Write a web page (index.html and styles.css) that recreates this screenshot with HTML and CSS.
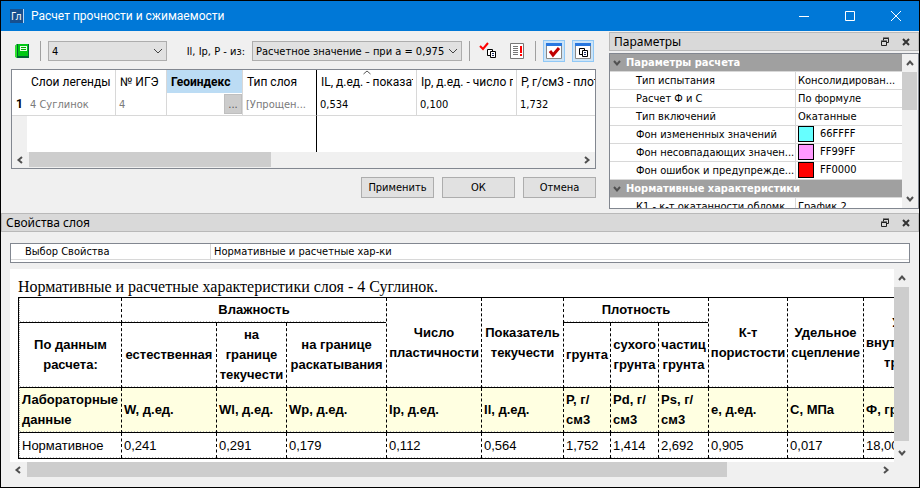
FILE: index.html
```html
<!DOCTYPE html>
<html lang="ru">
<head>
    <meta charset="UTF-8">
    <meta name="viewport" content="width=device-width, initial-scale=1.0">
    <title>Расчет прочности и сжимаемости</title>
    <link rel="stylesheet" href="styles.css">
</head>
<body>
    <svg class="defs" width="0" height="0">
        <symbol id="float" viewBox="0 0 10 10">
            <path d="M3.500 3.500v-2h5v4h-2M3 1h6" fill="none" stroke="#222"/>
            <path d="M1.500 4.500h5v4h-5zM1 4h6" fill="none" stroke="#222"/>
        </symbol>
        <symbol id="cross" viewBox="0 0 10 10">
            <path d="M2 2l6 6M8 2L2 8" stroke="#333" stroke-width="2"/>
        </symbol>
        <symbol id="chevron" viewBox="0 0 10 10">
            <path d="M1 3l4 4 4-4" fill="none" stroke="#444"/>
        </symbol>
        <symbol id="arrow" viewBox="0 0 10 10">
            <path d="M2 3l3 3.500L8 3" fill="none" stroke="#505050" stroke-width="2"/>
        </symbol>
        <symbol id="pages" viewBox="0 0 10 10">
            <path d="M.5.5h5v6h-5z" fill="#fff" stroke="#000"/>
            <path d="M3.500 2.500h5v6h-5z" fill="#fff" stroke="#000"/>
            <path d="M5 4.500h2M5 6.500h2" stroke="#236"/>
        </symbol>
    </svg>

    <header class="title-bar">
        <svg class="logo" width="14" height="14" viewBox="0 0 14 14">
            <path d="M0 0h14v14H0z" fill="#17508f"/>
            <path d="M13 0h1v14h-1z" fill="#b9d7f5"/>
            <text x="1" y="11" class="logo-text">Гл</text>
        </svg>
        <h1>Расчет прочности и сжимаемости</h1>
        <button class="win-btn" aria-label="Свернуть"><svg width="12" height="12"><path d="M1 6.500h10" stroke="#fff"/></svg></button>
        <button class="win-btn" aria-label="Развернуть"><svg width="12" height="12"><path d="M1.500 1.500h9v9h-9z" fill="none" stroke="#fff"/></svg></button>
        <button class="win-btn" aria-label="Закрыть"><svg width="12" height="12"><path d="M1 1l10 10M11 1L1 11" stroke="#fff"/></svg></button>
    </header>

    <main class="top">
        <section class="work">
            <div class="toolbar">
                <button class="tool" aria-label="Справочник">
                    <svg width="16" height="16">
                        <path d="M3 1h12v14H3L1 13V3z" fill="#063"/>
                        <path d="M4 1h10v12H4z" fill="#00c814"/>
                        <path d="M1 3l2-2v14l-2-1z" fill="#2ee02e"/>
                        <path d="M6 3h7v5H6z" fill="#e8ffe8"/>
                        <path d="M7 4.500h5M7 6.500h5" stroke="#0a0"/>
                    </svg>
                </button>
                <span class="sep"></span>
                <div class="combo combo-layer">
                    <select aria-label="Слой"><option>4</option></select>
                    <svg width="10" height="10"><use href="#chevron"/></svg>
                </div>
                <label for="source">Il, Ip, P - из:</label>
                <div class="combo combo-source">
                    <select id="source"><option>Расчетное значение – при a = 0,975</option></select>
                    <svg width="10" height="10"><use href="#chevron"/></svg>
                </div>
                <span class="sep"></span>
                <button class="tool" aria-label="Проверить">
                    <svg width="18" height="18">
                        <path d="M1 4l3 3 5-6" fill="none" stroke="#f00" stroke-width="2"/>
                        <use href="#pages" x="8" y="7" width="10" height="10"/>
                    </svg>
                </button>
                <button class="tool" aria-label="Ошибки">
                    <svg width="16" height="18">
                        <path d="M1.500 1.500h13v15h-13z" fill="#fff" stroke="#777"/>
                        <path d="M4 4.500h5M4 6.500h5M4 8.500h5M4 10.500h5M4 12.500h5" stroke="#777"/>
                        <path d="M11 4h2v7h-2zM11 12h2v2h-2z" fill="#f00"/>
                    </svg>
                </button>
                <span class="sep"></span>
                <button class="tool pressed" aria-label="Параметры" aria-pressed="true">
                    <svg width="16" height="16">
                        <path d="M.5.5h15v15H.5z" fill="#fff" stroke="#888"/>
                        <path d="M0 0h16v3H0z" fill="#2878e0"/>
                        <path d="M4 8l3 4 6-7" fill="none" stroke="#c00000" stroke-width="3"/>
                    </svg>
                </button>
                <button class="tool pressed" aria-label="Свойства" aria-pressed="true">
                    <svg width="16" height="16">
                        <path d="M.5.5h15v15H.5z" fill="#fff" stroke="#888"/>
                        <path d="M0 0h16v3H0z" fill="#2878e0"/>
                        <use href="#pages" x="4" y="5" width="10" height="10"/>
                    </svg>
                </button>
            </div>

            <div class="grid">
                <div class="grid-area">
                    <table class="layers">
                        <colgroup>
                            <col class="c-num"><col class="c-layer"><col class="c-ige"><col class="c-geo"><col class="c-type">
                            <col class="c-val"><col class="c-val"><col>
                        </colgroup>
                        <thead>
                            <tr>
                                <th></th>
                                <th>Слои легенды</th>
                                <th>№ ИГЭ</th>
                                <th class="current">Геоиндекс</th>
                                <th class="frozen">Тип слоя</th>
                                <th class="sorted"><div class="clip">IL, д.ед. - показат</div><svg width="8" height="5"><path d="M.5 4L4 1l3.500 3" fill="none" stroke="#555"/></svg></th>
                                <th><div class="clip">Ip, д.ед. - число п</div></th>
                                <th><div class="clip">P, г/см3 - плотн</div></th>
                            </tr>
                        </thead>
                        <tbody>
                            <tr>
                                <th scope="row">1</th>
                                <td class="muted">4 Суглинок</td>
                                <td class="muted">4</td>
                                <td class="pick"><button aria-label="Выбрать">...</button></td>
                                <td class="muted frozen">[Упрощен...</td>
                                <td>0,534</td>
                                <td>0,100</td>
                                <td>1,732</td>
                            </tr>
                            <tr class="rest">
                                <th></th><td></td><td></td><td></td><td class="frozen"></td><td></td><td></td><td></td>
                            </tr>
                        </tbody>
                    </table>
                </div>
                <div class="hscroll">
                    <svg class="left" width="10" height="10"><use href="#arrow"/></svg>
                    <div class="track"><div class="thumb thumb-grid"></div></div>
                    <svg class="right" width="10" height="10"><use href="#arrow"/></svg>
                </div>
            </div>

            <div class="actions">
                <button>Применить</button>
                <button>ОК</button>
                <button>Отмена</button>
            </div>
        </section>

        <aside class="dock">
            <div class="dock-title">
                <h2>Параметры</h2>
                <button aria-label="Открепить"><svg width="10" height="10"><use href="#float"/></svg></button>
                <button aria-label="Закрыть"><svg width="10" height="10"><use href="#cross"/></svg></button>
            </div>
            <div class="props">
                <div class="props-list">
                    <table>
                        <colgroup><col class="c-name"><col></colgroup>
                        <tbody>
                            <tr class="group"><th colspan="2"><svg width="10" height="10"><use href="#arrow"/></svg>Параметры расчета</th></tr>
                            <tr><td>Тип испытания</td><td>Консолидирован...</td></tr>
                            <tr><td>Расчет Ф и С</td><td>По формуле</td></tr>
                            <tr><td>Тип включений</td><td>Окатанные</td></tr>
                            <tr><td>Фон измененных значений</td><td><span class="swatch changed"></span>66FFFF</td></tr>
                            <tr><td>Фон несовпадающих значен...</td><td><span class="swatch mismatch"></span>FF99FF</td></tr>
                            <tr><td>Фон ошибок и предупрежде...</td><td><span class="swatch error"></span>FF0000</td></tr>
                            <tr class="group"><th colspan="2"><svg width="10" height="10"><use href="#arrow"/></svg>Нормативные характеристики</th></tr>
                            <tr><td>К1 - к-т окатанности обломк...</td><td>График 2</td></tr>
                        </tbody>
                    </table>
                </div>
                <div class="vscroll">
                    <svg class="up" width="10" height="10"><use href="#arrow"/></svg>
                    <div class="track"><div class="thumb thumb-props"></div></div>
                    <svg width="10" height="10"><use href="#arrow"/></svg>
                </div>
            </div>
        </aside>
    </main>

    <section class="layer">
        <div class="dock-title">
            <h2>Свойства слоя</h2>
            <button aria-label="Открепить"><svg width="10" height="10"><use href="#float"/></svg></button>
            <button aria-label="Закрыть"><svg width="10" height="10"><use href="#cross"/></svg></button>
        </div>
        <div class="layer-body">
            <div class="choice">
                <span>Выбор Свойства</span>
                <span>Нормативные и расчетные хар-ки</span>
            </div>
            <div class="view">
                <div class="report">
                    <p>Нормативные и расчетные характеристики слоя - 4 Суглинок.</p>
                    <table>
                        <colgroup>
                            <col class="r1"><col class="r2"><col class="r3"><col class="r4"><col class="r5"><col class="r6">
                            <col class="r7"><col class="r8"><col class="r9"><col class="r10"><col class="r11"><col class="r12">
                        </colgroup>
                        <thead>
                            <tr>
                                <th></th>
                                <th colspan="3">Влажность</th>
                                <th rowspan="2">Число пластичности</th>
                                <th rowspan="2">Показатель текучести</th>
                                <th colspan="3">Плотность</th>
                                <th rowspan="2">К-т пористости</th>
                                <th rowspan="2">Удельное сцепление</th>
                                <th rowspan="2">Угол<br>внутреннего<br>трения</th>
                            </tr>
                            <tr class="sub">
                                <th>По данным расчета:</th>
                                <th>естественная</th>
                                <th>на границе текучести</th>
                                <th>на границе раскатывания</th>
                                <th>грунта</th>
                                <th>сухого грунта</th>
                                <th>частиц грунта</th>
                            </tr>
                        </thead>
                        <tbody>
                            <tr class="units">
                                <th>Лабораторные данные</th>
                                <th>W, д.ед.</th>
                                <th>Wl, д.ед.</th>
                                <th>Wp, д.ед.</th>
                                <th>Ip, д.ед.</th>
                                <th>Il, д.ед.</th>
                                <th>P, г/<br>см3</th>
                                <th>Pd, г/<br>см3</th>
                                <th>Ps, г/<br>см3</th>
                                <th>е, д.ед.</th>
                                <th>С, МПа</th>
                                <th>Ф, град.</th>
                            </tr>
                            <tr>
                                <td>Нормативное</td>
                                <td>0,241</td>
                                <td>0,291</td>
                                <td>0,179</td>
                                <td>0,112</td>
                                <td>0,564</td>
                                <td>1,752</td>
                                <td>1,414</td>
                                <td>2,692</td>
                                <td>0,905</td>
                                <td>0,017</td>
                                <td>18,000</td>
                            </tr>
                        </tbody>
                    </table>
                </div>
                <div class="vscroll">
                    <svg class="up" width="10" height="10"><use href="#arrow"/></svg>
                    <div class="track"><div class="thumb thumb-report"></div></div>
                    <svg width="10" height="10"><use href="#arrow"/></svg>
                </div>
            </div>
            <div class="hscroll hscroll-report">
                <svg class="left" width="10" height="10"><use href="#arrow"/></svg>
                <div class="track"><div class="thumb thumb-wide"></div></div>
                <svg class="right" width="10" height="10"><use href="#arrow"/></svg>
            </div>
        </div>
    </section>
</body>
</html>
```

FILE: styles.css
```css
* {
    box-sizing: border-box;
}

body {
    margin: 0;
    min-height: 100vh;
    display: flex;
    flex-direction: column;
    border: 1px solid #000;
    background: #f0f0f0;
    color: #000;
    font-family: "DejaVu Sans Condensed", "DejaVu Sans", sans-serif;
    font-size: 11px;
}

button, select {
    font: inherit;
    color: inherit;
    padding: 0;
    margin: 0;
}

button {
    border: none;
    background: none;
}

svg {
    display: block;
    flex: none;
}

.defs {
    position: absolute;
}

h1, h2 {
    flex: 1;
    margin: 0;
    font-family: "Noto Sans", sans-serif;
    font-size: 12px;
    font-weight: normal;
}

/* title bar */
.title-bar {
    display: flex;
    align-items: center;
    height: 30px;
    padding-left: 9px;
    background: #0078d7;
    color: #fff;
}

.title-bar h1 {
    padding-left: 7px;
    font-family: Roboto, sans-serif;
}

.logo-text {
    font-family: "Noto Sans", sans-serif;
    font-size: 10px;
    fill: #fff;
}

.win-btn {
    width: 46px;
    height: 30px;
    display: grid;
    place-items: center;
}

/* upper part */
.top {
    display: flex;
    padding-top: 1px;
    height: 182px;
}

.work {
    flex: 1;
    min-width: 0;
    padding: 8px 13px 0 10px;
}

.toolbar {
    display: flex;
    align-items: center;
    gap: 7px;
    height: 22px;
    margin-bottom: 7px;
}

.toolbar label {
    width: 71px;
    flex: none;
    text-align: right;
    white-space: nowrap;
}

.tool {
    flex: none;
    width: 22px;
    height: 22px;
    display: grid;
    place-items: center;
}

.tool.pressed {
    background: #cce4f7;
    border: 1px solid #90c8f6;
}

.sep {
    flex: none;
    width: 1px;
    height: 20px;
    background: #a0a0a0;
}

.combo {
    position: relative;
    flex: none;
    height: 20px;
}

.combo-layer {
    width: 119px;
}

.combo-source {
    width: 210px;
}

.combo select {
    appearance: none;
    width: 100%;
    height: 20px;
    padding: 0 3px;
    border: 1px solid #adadad;
    border-radius: 0;
    background: #e1e1e1;
}

.combo svg {
    position: absolute;
    right: 4px;
    top: 5px;
    pointer-events: none;
}

/* layer grid */
.grid {
    border: 1px solid #828790;
    background: #fff;
}

.grid-area {
    height: 82px;
    overflow: hidden;
}

.layers {
    width: 100%;
    table-layout: fixed;
    border-collapse: separate;
    border-spacing: 0;
}

.c-num { width: 15px; }
.c-layer { width: 89px; }
.c-ige { width: 51px; }
.c-geo { width: 76px; }
.c-type { width: 74px; }
.c-val { width: 100px; }

.layers th, .layers td {
    height: 23px;
    padding: 0 3px;
    border-right: 1px solid #d8d8d8;
    text-align: left;
    white-space: nowrap;
    overflow: hidden;
}

.layers th {
    font-family: Roboto, sans-serif;
    font-size: 12px;
    font-weight: normal;
}

.layers thead th {
    position: relative;
    padding: 0 3px 0 4px;
}

.clip {
    overflow: hidden;
}

.layers th:first-child {
    padding: 0;
    border-right: none;
    text-align: center;
    font-weight: bold;
}

.layers tbody tr:first-child > * {
    border-bottom: 1px solid #d8d8d8;
}

.layers th:last-child, .layers td:last-child {
    border-right: none;
}

.layers thead th:last-child {
    padding-right: 0;
}

.layers thead .current {
    background: #bcdcf4;
    font-weight: bold;
}

.layers thead .sorted svg {
    position: absolute;
    top: 0;
    left: 46px;
}

.layers .muted {
    color: #7a7a7a;
}

.layers .pick {
    padding: 0;
    text-align: right;
}

.pick button {
    width: 18px;
    height: 20px;
    background: #ccc;
    border: 1px solid #bfbfbf;
    color: #555;
}

.layers .rest > * {
    height: 36px;
    border-color: transparent;
}

.layers .rest th {
    background: #f0f0f0;
}

.layers .frozen, .layers .rest .frozen {
    border-right: 1px solid #000;
}

/* scroll bars */
.hscroll {
    display: flex;
    align-items: center;
    height: 16px;
    padding: 0 3px;
    gap: 4px;
    background: #f0f0f0;
}

.vscroll {
    display: flex;
    flex-direction: column;
    align-items: center;
    flex: none;
    width: 16px;
    padding: 4px 0;
    gap: 4px;
    background: #f0f0f0;
}

.track {
    flex: 1;
    align-self: stretch;
}

.thumb {
    background: #cdcdcd;
}

.hscroll .thumb {
    height: 15px;
}

.vscroll .thumb {
    width: 15px;
}

.thumb-grid { width: 44%; }
.thumb-wide { width: 82.4%; }
.thumb-props { height: 32%; }
.thumb-report { height: 98%; }

.up { transform: rotate(180deg); }
.left { transform: rotate(90deg); }
.right { transform: rotate(-90deg); }

/* buttons */
.actions {
    display: flex;
    justify-content: flex-end;
    gap: 8px;
    margin-top: 8px;
}

.actions button {
    width: 73px;
    height: 21px;
    border: 1px solid #adadad;
    background: #e1e1e1;
}

/* docked panels */
.dock {
    flex: none;
    width: 310px;
}

.dock-title {
    display: flex;
    align-items: center;
    height: 19px;
    padding: 0 7px 0 4px;
    border: 1px solid #b9b9b9;
    background: #d9d9d9;
}

.dock-title button {
    margin-left: 11px;
}

.props {
    display: flex;
    height: 156px;
    margin-top: 2px;
    border: 1px solid #828790;
    background: #fff;
}

.props-list {
    flex: 1;
    min-width: 0;
    overflow: hidden;
}

.props table {
    width: 100%;
    table-layout: fixed;
    border-collapse: separate;
    border-spacing: 0;
}

.c-name { width: 186px; }

.props td, .props th {
    height: 18px;
    padding: 0 2px 1px;
    border-bottom: 1px solid #d8d8d8;
    text-align: left;
    white-space: nowrap;
    overflow: hidden;
}

.props td:first-child {
    padding-left: 26px;
    border-right: 1px solid #d8d8d8;
}

.props .group th {
    background: #a0a0a0;
    color: #fff;
}

.group svg {
    display: inline-block;
    margin-right: 4px;
    vertical-align: middle;
}

.swatch {
    display: inline-block;
    width: 16px;
    height: 16px;
    margin-right: 6px;
    border: 1px solid #000;
    vertical-align: middle;
}

.changed { background: #66ffff; }
.mismatch { background: #ff99ff; }
.error { background: #ff0000; }

/* layer properties */
.layer-body {
    padding: 11px 9px 9px;
}

.choice {
    display: grid;
    grid-template-columns: 200px 1fr;
    height: 20px;
    padding-bottom: 2px;
    margin-bottom: 6px;
    border: 1px solid #828790;
    background: #fff;
}

.choice span {
    padding-left: 3px;
    line-height: 15px;
    border-bottom: 1px solid #d8d8d8;
}

.choice span:first-child {
    padding-left: 14px;
    border-right: 1px solid #d8d8d8;
}

.view {
    display: flex;
}

.report {
    flex: 1;
    min-width: 0;
    overflow: hidden;
    padding: 8px 0 3px 8px;
    background: #fff;
}

.report p {
    margin: 0;
    font-family: "Liberation Serif", serif;
    font-size: 16px;
    line-height: 20px;
}

.report table {
    width: 932px;
    table-layout: fixed;
    border-collapse: separate;
    border-spacing: 0;
    border: 1px solid #000;
    font-family: "Liberation Sans", sans-serif;
    font-size: 13px;
    line-height: 20px;
}

.r1 { width: 102px; }
.r2 { width: 95px; }
.r3 { width: 70px; }
.r4 { width: 100px; }
.r5 { width: 95px; }
.r6 { width: 82px; }
.r7 { width: 47px; }
.r8 { width: 48px; }
.r9 { width: 50px; }
.r10 { width: 79px; }
.r11 { width: 76px; }
.r12 { width: 86px; }

.report th, .report td {
    height: 25px;
    padding: 2px 0 2px 2px;
    border-left: 1px dashed #000;
    border-bottom: 1px solid #000;
    background: repeating-linear-gradient(90deg, #bbb 0 1px, transparent 1px 3px) bottom / 100% 1px no-repeat;
    background-origin: padding-box;
    text-align: left;
}

.report thead th {
    padding: 2px 0;
    text-align: center;
}

.report th:first-child, .report td:first-child {
    border-left: 1px dotted #aaa;
}

.report thead .sub th {
    height: 65px;
}

.report .units th {
    height: 45px;
    background-color: #ffffe1;
}

.report tbody tr:last-child td {
    border-bottom: none;
}

.hscroll-report {
    margin-right: 16px;
}
```
